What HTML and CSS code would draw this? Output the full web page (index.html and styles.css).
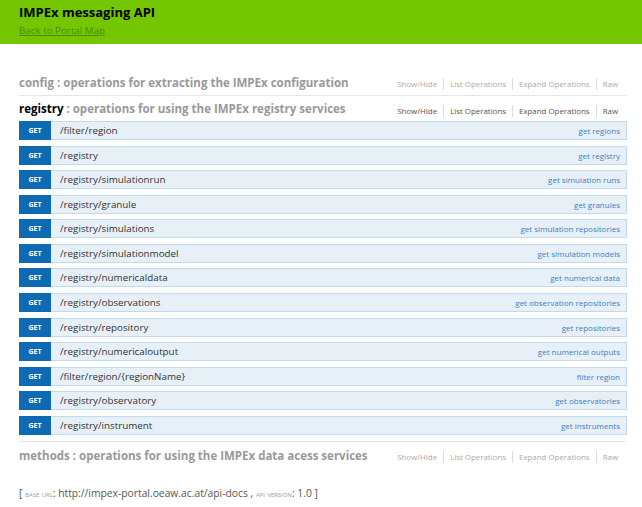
FILE: index.html
```html
<!DOCTYPE html>
<html>
<head>
<meta charset="utf-8">
<link rel="stylesheet" href="styles.css">
</head>
<body>
<div class="header">
  <div class="title">IMPEx messaging API</div>
  <a class="back" href="#">Back to Portal Map</a>
</div>
<div class="main">
  <div class="resource">
    <div class="heading">
      <h2><span class="rname">config</span> : operations for extracting the IMPEx configuration</h2>
      <ul class="options"><li>Show/Hide</li><li>List Operations</li><li>Expand Operations</li><li>Raw</li></ul>
    </div>
  </div>
  <div class="resource active">
    <div class="heading">
      <h2><span class="rname">registry</span> : operations for using the IMPEx registry services</h2>
      <ul class="options"><li>Show/Hide</li><li>List Operations</li><li>Expand Operations</li><li>Raw</li></ul>
    </div>
    <ul class="ops">
      <li class="op"><span class="verb">GET</span><span class="path">/filter/region</span><span class="summary">get regions</span></li>
      <li class="op"><span class="verb">GET</span><span class="path">/registry</span><span class="summary">get registry</span></li>
      <li class="op"><span class="verb">GET</span><span class="path">/registry/simulationrun</span><span class="summary">get simulation runs</span></li>
      <li class="op"><span class="verb">GET</span><span class="path">/registry/granule</span><span class="summary">get granules</span></li>
      <li class="op"><span class="verb">GET</span><span class="path">/registry/simulations</span><span class="summary">get simulation repositories</span></li>
      <li class="op"><span class="verb">GET</span><span class="path">/registry/simulationmodel</span><span class="summary">get simulation models</span></li>
      <li class="op"><span class="verb">GET</span><span class="path">/registry/numericaldata</span><span class="summary">get numerical data</span></li>
      <li class="op"><span class="verb">GET</span><span class="path">/registry/observations</span><span class="summary">get observation repositories</span></li>
      <li class="op"><span class="verb">GET</span><span class="path">/registry/repository</span><span class="summary">get repositories</span></li>
      <li class="op"><span class="verb">GET</span><span class="path">/registry/numericaloutput</span><span class="summary">get numerical outputs</span></li>
      <li class="op"><span class="verb">GET</span><span class="path">/filter/region/{regionName}</span><span class="summary">filter region</span></li>
      <li class="op"><span class="verb">GET</span><span class="path">/registry/observatory</span><span class="summary">get observatories</span></li>
      <li class="op"><span class="verb">GET</span><span class="path">/registry/instrument</span><span class="summary">get instruments</span></li>
    </ul>
  </div>
  <div class="resource last">
    <div class="heading">
      <h2><span class="rname">methods</span> : operations for using the IMPEx data acess services</h2>
      <ul class="options"><li>Show/Hide</li><li>List Operations</li><li>Expand Operations</li><li>Raw</li></ul>
    </div>
  </div>
  <div class="footer">[ <span class="sc">base url</span>: http://impex-portal.oeaw.ac.at/api-docs , <span class="sc">api version</span>: 1.0 ]</div>
</div>
</body>
</html>
```

FILE: styles.css
```css
* { box-sizing: border-box; }
html, body { margin: 0; padding: 0; background: #fff; }
body { font-family: "Open Sans", "DejaVu Sans", sans-serif; color: #333; }

.header {
  height: 44px;
  background: #74c700;
  padding: 4px 0 0 19px;
}
.title {
  font-family: "Open Sans", sans-serif;
  font-weight: bold;
  font-size: 13px;
  line-height: 17px;
  color: #000;
}
.back {
  display: block;
  width: max-content;
  margin-top: 3px;
  font-size: 9.8px;
  line-height: 13px;
  color: #4a8d00;
  text-decoration: underline;
}

.main { padding: 25px 15px 0 19px; }

.resource { border-bottom: 1px solid #e5e5e5; }
.resource.last { border-bottom: none; }
.heading {
  display: flex;
  align-items: center;
  justify-content: space-between;
  height: 26px;
}
.resource.active .heading { height: 25px; }
h2 {
  margin: 0;
  font-size: 11.5px;
  font-weight: bold;
  color: #999;
  white-space: nowrap;
}
.active h2 .rname { color: #000; }
.options {
  display: flex;
  flex-shrink: 0;
  white-space: nowrap;
  list-style: none;
  margin: 0;
  padding: 4px 9px 0 0;
  font-size: 7.9px;
  color: #aaa;
}
.active .options { color: #555; }
.options li { padding: 0 6px; border-left: 1px solid #ddd; line-height: 12px; }
.options li:first-child { border-left: none; }
.options li:last-child { padding-right: 0; }

.ops { list-style: none; margin: 0 0 6.5px; padding: 0; }
.op {
  display: flex;
  align-items: center;
  height: 19px;
  margin-bottom: 5.58px;
  background: #e7f0f7;
  border: 1px solid #c3d9ec;
  border-left: none;
}
.op:last-child { margin-bottom: 0; }
.verb {
  width: 32px;
  height: 19px;
  margin: -1px 0;
  background: #0f6ab4;
  color: #fff;
  font-size: 7px;
  font-weight: bold;
  display: flex;
  align-items: center;
  justify-content: center;
}
.path {
  margin-left: 9px;
  font-size: 9.8px;
  color: #333;
  flex: 1;
}
.summary {
  font-size: 8px;
  color: #3f7fc4;
  padding-right: 6px;
}

.footer {
  margin-top: 18px;
  font-size: 10.3px;
  line-height: 14px;
  color: #555;
}
.footer .sc { font-variant: small-caps; font-size: 8.5px; color: #999; }
```
